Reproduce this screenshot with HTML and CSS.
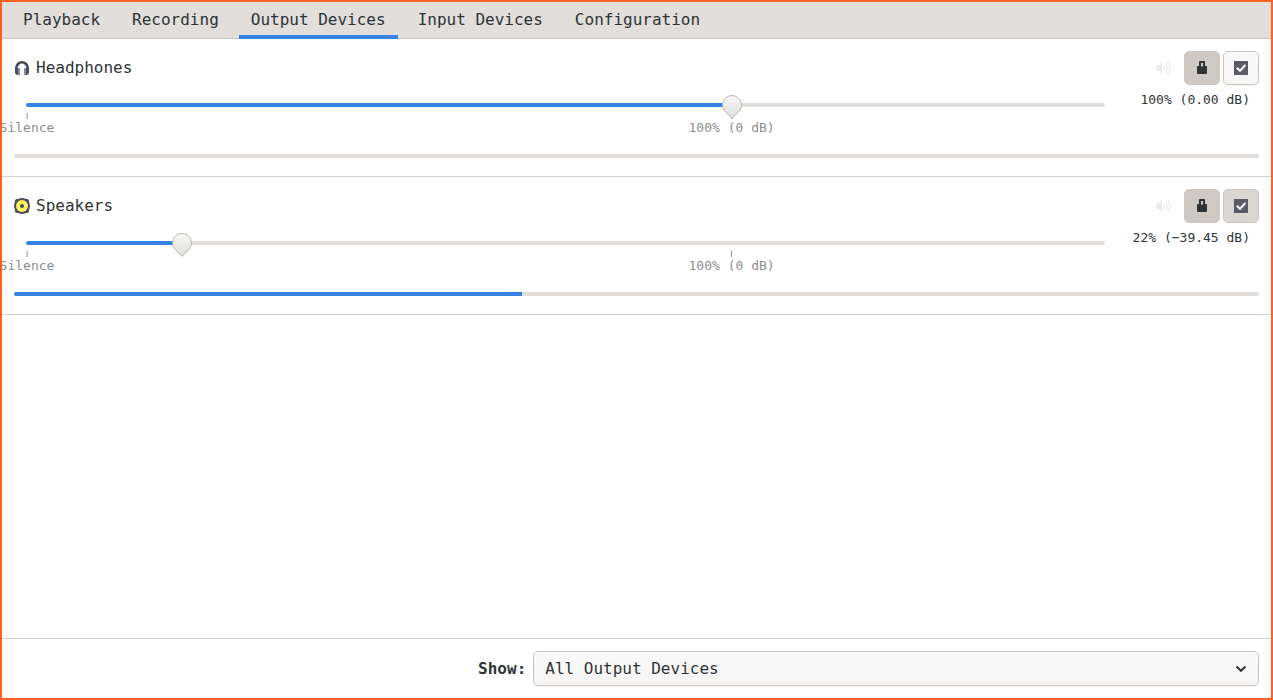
FILE: index.html
```
<!DOCTYPE html>
<html lang="en">
<head>
    <meta charset="UTF-8">
    <meta name="viewport" content="width=device-width, initial-scale=1.0">
    <title>Volume Control</title>
    <link rel="stylesheet" href="styles.css">
</head>
<body>
    <svg class="defs" aria-hidden="true">
        <symbol id="icon-volume" viewBox="0 0 16 16">
            <path d="M1 5.500h2L7 2v12L3 10.500H1z" fill="currentColor"/>
            <path d="M8.500 5.500a3.500 3.500 0 0 1 0 5M10.500 3.800a6 6 0 0 1 0 8.400M12.500 2a8.500 8.500 0 0 1 0 12" fill="none" stroke="currentColor" stroke-width="1.500" opacity=".8"/>
        </symbol>
        <symbol id="icon-lock" viewBox="0 0 16 16">
            <path d="M6 1h4q1 0 1 1v4h1q1 0 1 1v6q0 1-1 1H4q-1 0-1-1V7q0-1 1-1h1V2q0-1 1-1zM7 3v3.500h2V3z" fill="currentColor" fill-rule="evenodd"/>
        </symbol>
        <symbol id="icon-check" viewBox="0 0 16 16">
            <path d="M1 1h14v14H1z" fill="#5b5b66"/>
            <path d="M3.800 7.800L7 10.800l5.300-5.800" fill="none" stroke="#fff" stroke-width="2"/>
        </symbol>
    </svg>

    <nav class="tabs">
        <button class="tab">Playback</button>
        <button class="tab">Recording</button>
        <button class="tab active">Output Devices</button>
        <button class="tab">Input Devices</button>
        <button class="tab">Configuration</button>
    </nav>

    <main class="devices">
        <section class="device">
            <div class="device-head">
                <svg class="device-icon" viewBox="0 0 16 16" aria-hidden="true">
                    <path d="M2.300 13V8a5.700 5.700 0 0 1 11.400 0v5" fill="none" stroke="#454759" stroke-width="2.600"/>
                    <path d="M1 8h3v7H3q-2-1-2-3zM15 8h-3v7h1q2-1 2-3z" fill="#4a4b60"/>
                    <path d="M4 8h2v7H4zM10 8h2v7h-2z" fill="#8689a3"/>
                </svg>
                <h2 class="device-name">Headphones</h2>
                <button class="btn flat" aria-label="Mute"><svg class="icon"><use href="#icon-volume"/></svg></button>
                <button class="btn lock" aria-label="Lock channels" aria-pressed="true"><svg class="icon"><use href="#icon-lock"/></svg></button>
                <button class="btn" aria-label="Set as fallback" aria-pressed="false"><svg class="icon"><use href="#icon-check"/></svg></button>
            </div>
            <div class="volume">
                <div class="scale">
                    <div class="trough" style="--level: 65.36%"></div>
                    <input class="slider" type="range" min="0" max="153" value="100" aria-label="Headphones volume">
                    <div class="marks">
                        <span class="mark" style="left: 0%">Silence</span>
                        <span class="mark" style="left: 65.36%">100% (0 dB)</span>
                    </div>
                </div>
                <output class="value">100% (0.00 dB)</output>
            </div>
            <progress class="peak" max="100" value="0" aria-label="Headphones peak"></progress>
        </section>

        <section class="device">
            <div class="device-head">
                <svg class="device-icon" viewBox="0 0 16 16" aria-hidden="true">
                    <rect x="1" y="1" width="14" height="14" rx="2" fill="#4a4b60"/>
                    <circle cx="8" cy="8" r="8" fill="#4a4b60"/>
                    <circle cx="8" cy="8" r="6" fill="#fff460"/>
                    <circle cx="8" cy="8" r="2" fill="#4a4b60"/>
                </svg>
                <h2 class="device-name">Speakers</h2>
                <button class="btn flat" aria-label="Mute"><svg class="icon"><use href="#icon-volume"/></svg></button>
                <button class="btn lock" aria-label="Lock channels" aria-pressed="true"><svg class="icon"><use href="#icon-lock"/></svg></button>
                <button class="btn fallback" aria-label="Set as fallback" aria-pressed="true"><svg class="icon"><use href="#icon-check"/></svg></button>
            </div>
            <div class="volume">
                <div class="scale">
                    <div class="trough" style="--level: 14.38%"></div>
                    <input class="slider" type="range" min="0" max="153" value="22" aria-label="Speakers volume">
                    <div class="marks">
                        <span class="mark" style="left: 0%">Silence</span>
                        <span class="mark" style="left: 65.36%">100% (0 dB)</span>
                    </div>
                </div>
                <output class="value">22% (−39.45 dB)</output>
            </div>
            <progress class="peak" max="100" value="40.8" aria-label="Speakers peak"></progress>
        </section>
    </main>

    <footer class="filter">
        <label class="filter-label" for="show">Show:</label>
        <select class="filter-select" id="show">
            <option>All Output Devices</option>
            <option>Hardware Output Devices</option>
            <option>Virtual Output Devices</option>
        </select>
    </footer>
</body>
</html>
```
FILE: styles.css
```
* {
    box-sizing: border-box;
}

body {
    margin: 0;
    min-height: 100vh;
    display: flex;
    flex-direction: column;
    border: 2px solid #ff6124;
    background: #fff;
    color: #2e3436;
    font-family: "DejaVu Sans Mono", monospace;
    font-size: 16px;
    line-height: 20px;
}

button, select {
    font: inherit;
    color: inherit;
}

.defs {
    display: none;
}

/* tabs */
.tabs {
    display: flex;
    gap: 8px;
    padding: 0 9px;
    background: #e1dedb;
    box-shadow: inset 0 -1px #cdc7c2;
}

.tab {
    height: 37px;
    padding: 0 12px 2px;
    border: 0;
    background: none;
}

.tab.active {
    box-shadow: inset 0 -4px #3584e4;
}

/* devices */
.devices {
    flex: 1;
}

.device {
    padding: 12px 12px 18px;
    border-bottom: 1px solid #d5d0cc;
}

.device-head {
    display: flex;
    align-items: center;
    gap: 3px;
}

.device-icon {
    width: 16px;
    height: 16px;
}

.device-name {
    flex: 1;
    margin: 0;
    padding-left: 3px;
    font-size: 16px;
    font-weight: normal;
}

.btn {
    display: flex;
    align-items: center;
    justify-content: center;
    width: 36px;
    height: 34px;
    padding: 0;
    border: 1px solid #cdc7c2;
    border-radius: 5px;
    background: linear-gradient(#fbfafa, #f6f5f4);
    box-shadow: 0 1px 2px rgba(0, 0, 0, 0.07);
}

.btn.flat {
    border-color: transparent;
    background: none;
    box-shadow: none;
    color: #ebebeb;
}

.btn.lock {
    background: #cfc9c3;
    box-shadow: none;
}

.btn.fallback {
    background: #dad6d2;
    box-shadow: none;
}

.icon {
    width: 16px;
    height: 16px;
}

.volume {
    display: flex;
    font-size: 13px;
    line-height: 16px;
}

.scale {
    flex: 1;
    display: grid;
    padding: 10px 0 0 3px;
}

.trough {
    grid-area: 1 / 1;
    height: 4px;
    margin: 8px 10px 0 9px;
    border-radius: 2px;
    background: linear-gradient(to right, #3584e4 var(--level), #e1dedb var(--level));
}

.slider {
    grid-area: 1 / 1;
    z-index: 1;
    appearance: none;
    width: 100%;
    height: 24px;
    margin: 0;
    background: none;
}

.slider::-webkit-slider-thumb {
    appearance: none;
    width: 20px;
    height: 24px;
    background: url("data:image/svg+xml,%3Csvg xmlns='http://www.w3.org/2000/svg' viewBox='0 0 20 24'%3E%3ClinearGradient id='g' x2='0' y2='1'%3E%3Cstop stop-color='%23f8f8f7'/%3E%3Cstop offset='1' stop-color='%23dedddb'/%3E%3C/linearGradient%3E%3Cpath d='M10 .5a9.500 9.500 0 0 1 9.500 9.500c0 3.500-1.500 5.500-3.500 7.500L10 23.300 4 17.500C2 15.500.5 13.500.5 10A9.500 9.500 0 0 1 10 .5z' fill='url(%23g)' stroke='%23bcb5ae'/%3E%3C/svg%3E") no-repeat;
}

.marks {
    position: relative;
    height: 22px;
    margin: -6px 10px 0;
    color: #8b8e8f;
}

.mark {
    position: absolute;
    padding-top: 7px;
    transform: translateX(-50%);
    white-space: nowrap;
    background: linear-gradient(#8b8e8f, #8b8e8f) top / 1px 6px no-repeat;
}

.value {
    width: 144px;
    padding: 7px 9px 0 0;
    text-align: right;
    white-space: nowrap;
}

.peak {
    appearance: none;
    display: block;
    width: 100%;
    height: 4px;
    margin-top: 19px;
    border: 0;
    border-radius: 2px;
    overflow: hidden;
    background: #e1dedb;
}

.peak::-webkit-progress-bar {
    background: #e1dedb;
}

.peak::-webkit-progress-value {
    background: #3584e4;
}

/* bottom bar */
.filter {
    display: grid;
    grid-template-columns: 12fr 17fr;
    align-items: center;
    gap: 7px;
    padding: 12px;
    border-top: 1px solid #d5d0cc;
}

.filter-label {
    text-align: right;
    font-weight: bold;
}

.filter-select {
    appearance: none;
    height: 35px;
    padding: 0 32px 0 11px;
    border: 1px solid #cdc7c2;
    border-radius: 5px;
    background: url("data:image/svg+xml,%3Csvg xmlns='http://www.w3.org/2000/svg' viewBox='0 0 16 16'%3E%3Cpath d='M3.500 5.500L8 9.800 12.500 5.500' fill='none' stroke='%232e3436' stroke-width='2'/%3E%3C/svg%3E") right 9px center / 16px no-repeat, linear-gradient(#fbfafa, #f6f5f4);
    box-shadow: 0 1px 2px rgba(0, 0, 0, 0.07);
}
```
